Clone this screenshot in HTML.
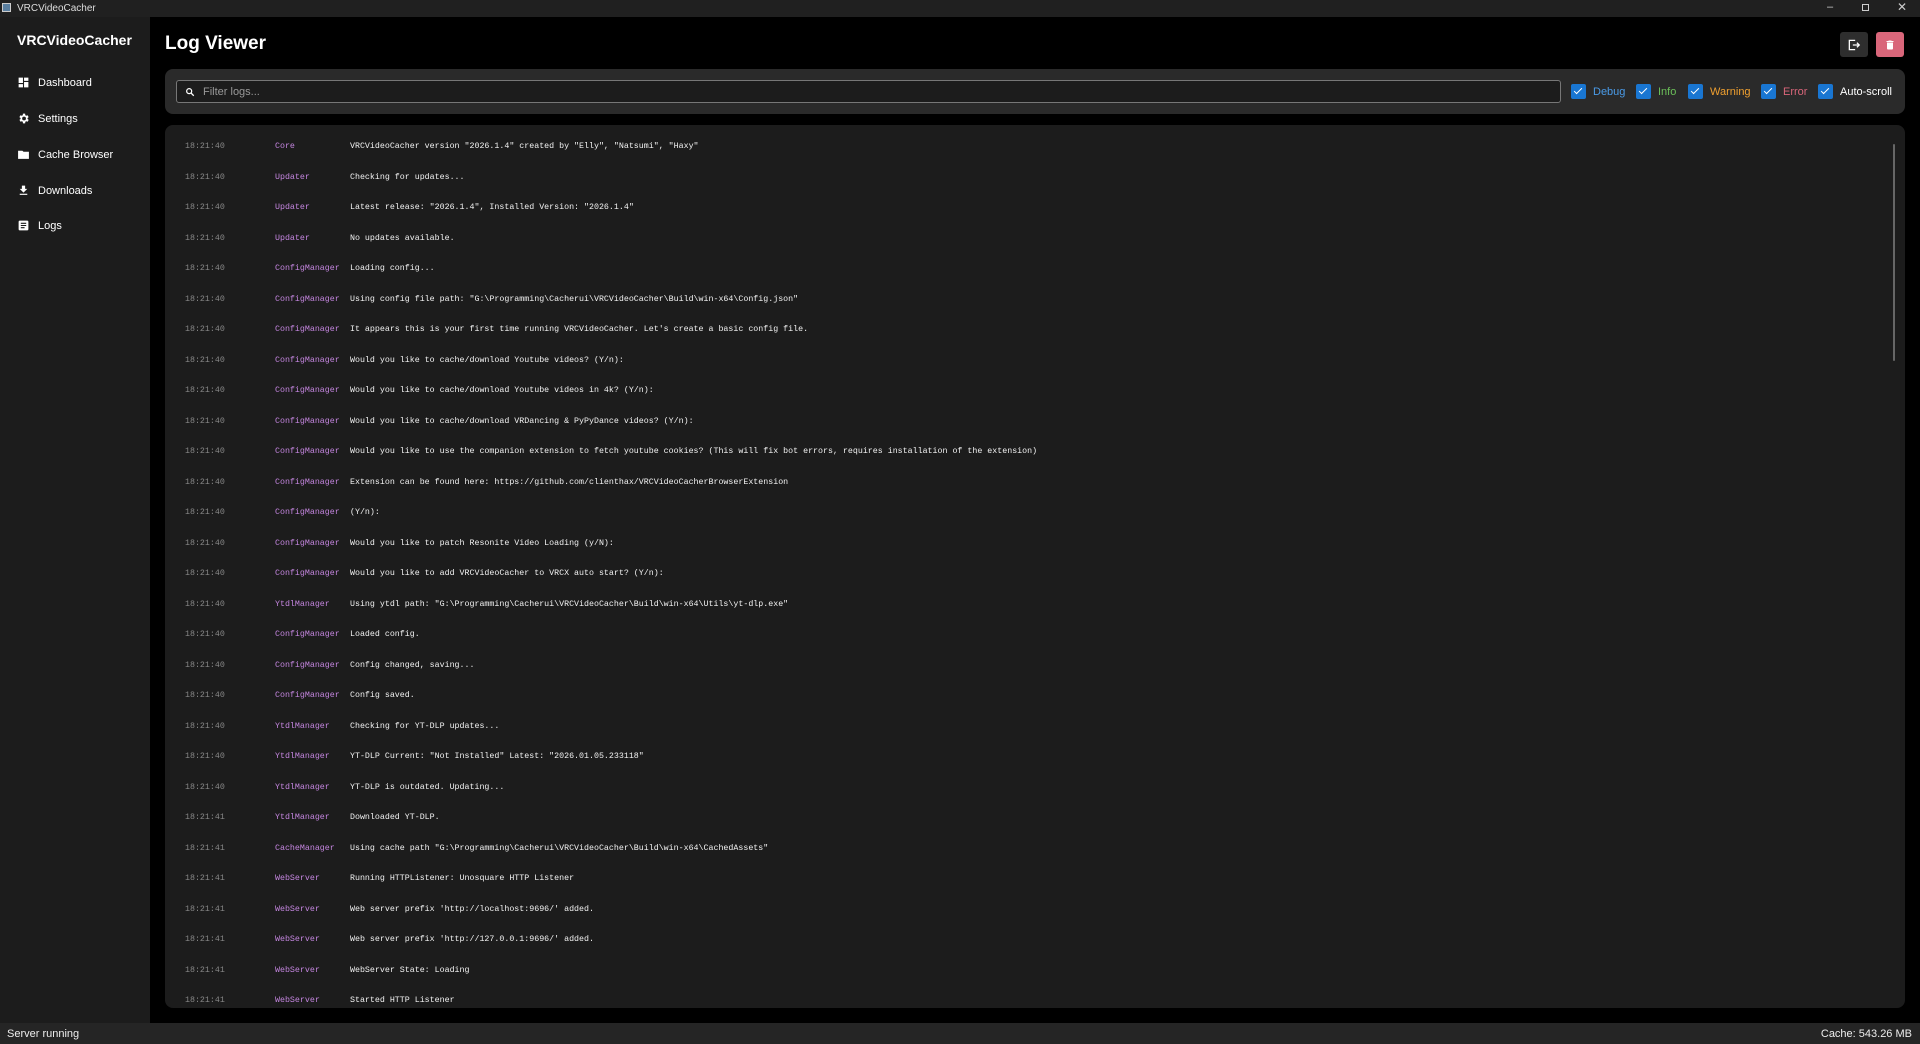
<!DOCTYPE html>
<html><head><meta charset="utf-8"><style>
*{box-sizing:border-box;margin:0;padding:0}
body{width:1920px;height:1044px;background:#000;font-family:"Liberation Sans",sans-serif;color:#fff;overflow:hidden;position:relative}
.tb{position:absolute;left:0;top:0;width:1920px;height:17px;background:#202020;font-size:10px;color:#ddd}
.tb .t{position:absolute;left:17px;top:3px}
.tb .ic{position:absolute;left:2px;top:3px;width:9px;height:9px;background:#5a7fa0;border:1px solid #ccc}
.side{position:absolute;left:0;top:17px;width:150px;height:1006px;background:#1c1c1c}
.brand{position:absolute;left:17px;top:15px;font-size:14px;font-weight:bold}
.nav{position:absolute;left:17px;font-size:11px;display:flex;align-items:center}
.nav svg{width:13px;height:13px;margin-right:8px;fill:#fff}
h1{position:absolute;left:165px;top:33px;font-size:19px;font-weight:bold}
.btn{position:absolute;top:32px;width:28px;height:25px;border-radius:3px;display:flex;align-items:center;justify-content:center}
.filter{position:absolute;left:165px;top:69px;width:1740px;height:45px;background:#2a2a2a;border-radius:8px}
.inp{position:absolute;left:11px;top:11px;width:1385px;height:23px;border:1px solid #777;border-radius:3px;background:#1c1c1c;font-size:11px;color:#999;padding:5px 0 0 26px}
.cb{position:absolute;top:15px;font-size:11px;display:flex;align-items:center}
.cb i{display:inline-block;width:15px;height:15px;background:#1976d2;border-radius:2px;margin-right:7px;position:relative}
.cb i:after{content:"";position:absolute;left:5px;top:2px;width:3px;height:7px;border:solid #fff;border-width:0 1.3px 1.3px 0;transform:rotate(45deg)}
.logs{position:absolute;left:165px;top:125px;width:1740px;height:883px;background:#1c1c1c;border-radius:8px;overflow:hidden;padding-top:7px}
.r{height:30.5px;line-height:30.5px;font-family:"Liberation Mono",monospace;font-size:8.3px;position:relative;white-space:nowrap}
.r span{position:absolute}
.a{left:20px;color:#888}.b{left:110px;color:#c586e0}.c{left:185px;color:#f2f2f2}
.sb{position:absolute;left:1728px;top:19px;width:2px;height:217px;background:#666;border-radius:1px}
.st{position:absolute;left:0;top:1023px;width:1920px;height:21px;background:#252525;font-size:11px;color:#eee}
</style></head><body>
<div class="tb"><div class="ic"></div><div class="t">VRCVideoCacher</div>
<div style="position:absolute;left:1827px;top:1px;font-size:11px;color:#ccc">–</div>
<div style="position:absolute;left:1862px;top:4px;width:7px;height:7px;border:1px solid #ccc"></div>
<div style="position:absolute;left:1897px;top:0px;font-size:12px;color:#ccc">✕</div></div>
<div class="side">
<div class="brand">VRCVideoCacher</div>
<div class="nav" style="top:59px"><svg viewBox="0 0 24 24"><path d="M3 13h8V3H3v10zm0 8h8v-6H3v6zm10 0h8V11h-8v10zm0-18v6h8V3h-8z"/></svg>Dashboard</div>
<div class="nav" style="top:95px"><svg viewBox="0 0 24 24"><path d="M19.4 13a7.5 7.5 0 000-2l2.1-1.6-2-3.5-2.5 1a7 7 0 00-1.7-1L15 3h-4l-.4 2.9a7 7 0 00-1.7 1l-2.5-1-2 3.5L6.6 11a7.5 7.5 0 000 2l-2.1 1.6 2 3.5 2.5-1a7 7 0 001.7 1L11 21h4l.4-2.9a7 7 0 001.7-1l2.5 1 2-3.5L19.4 13zM13 15.5a3.5 3.5 0 110-7 3.5 3.5 0 010 7z"/></svg>Settings</div>
<div class="nav" style="top:131px"><svg viewBox="0 0 24 24"><path d="M2 5h8l2 2h10v13H2z"/></svg>Cache Browser</div>
<div class="nav" style="top:167px"><svg viewBox="0 0 24 24"><path d="M19 9h-4V3H9v6H5l7 7 7-7zM5 18v2h14v-2H5z"/></svg>Downloads</div>
<div class="nav" style="top:202px"><svg viewBox="0 0 24 24"><path d="M19 3H5a2 2 0 00-2 2v14a2 2 0 002 2h14a2 2 0 002-2V5a2 2 0 00-2-2zm-5 14H7v-2h7v2zm3-4H7v-2h10v2zm0-4H7V7h10v2z"/></svg>Logs</div>
</div>
<h1>Log Viewer</h1>
<div class="btn" style="left:1840px;background:#2e2e2e"><svg width="14" height="14" viewBox="0 0 24 24" fill="none" stroke="#fff" stroke-width="2.2"><path d="M14 4H4v16h10M10 12h11M17 8l4 4-4 4"/></svg></div>
<div class="btn" style="left:1876px;background:#d9667a"><svg width="12" height="14" viewBox="0 0 24 24" fill="#fff"><path d="M6 19a2 2 0 002 2h8a2 2 0 002-2V7H6v12zM19 4h-3.5l-1-1h-5l-1 1H5v2h14V4z"/></svg></div>
<div class="filter">
<div class="inp"><svg style="position:absolute;left:8px;top:6px" width="10" height="10" viewBox="0 0 24 24" fill="none" stroke="#fff" stroke-width="3"><circle cx="10" cy="10" r="6"/><path d="M15 15l6 6"/></svg>Filter logs...</div>
<div class="cb" style="left:1406px;color:#4a9be8"><i></i>Debug</div>
<div class="cb" style="left:1471px;color:#6bbf59"><i></i>Info</div>
<div class="cb" style="left:1523px;color:#f0a030"><i></i>Warning</div>
<div class="cb" style="left:1596px;color:#d9667a"><i></i>Error</div>
<div class="cb" style="left:1653px;color:#fff"><i></i>Auto-scroll</div>
</div>
<div class="logs">
<div class="sb"></div>
<div class="r"><span class="a">18:21:40</span><span class="b">Core</span><span class="c">VRCVideoCacher version "2026.1.4" created by "Elly", "Natsumi", "Haxy"</span></div>
<div class="r"><span class="a">18:21:40</span><span class="b">Updater</span><span class="c">Checking for updates...</span></div>
<div class="r"><span class="a">18:21:40</span><span class="b">Updater</span><span class="c">Latest release: "2026.1.4", Installed Version: "2026.1.4"</span></div>
<div class="r"><span class="a">18:21:40</span><span class="b">Updater</span><span class="c">No updates available.</span></div>
<div class="r"><span class="a">18:21:40</span><span class="b">ConfigManager</span><span class="c">Loading config...</span></div>
<div class="r"><span class="a">18:21:40</span><span class="b">ConfigManager</span><span class="c">Using config file path: "G:\Programming\Cacherui\VRCVideoCacher\Build\win-x64\Config.json"</span></div>
<div class="r"><span class="a">18:21:40</span><span class="b">ConfigManager</span><span class="c">It appears this is your first time running VRCVideoCacher. Let's create a basic config file.</span></div>
<div class="r"><span class="a">18:21:40</span><span class="b">ConfigManager</span><span class="c">Would you like to cache/download Youtube videos? (Y/n):</span></div>
<div class="r"><span class="a">18:21:40</span><span class="b">ConfigManager</span><span class="c">Would you like to cache/download Youtube videos in 4k? (Y/n):</span></div>
<div class="r"><span class="a">18:21:40</span><span class="b">ConfigManager</span><span class="c">Would you like to cache/download VRDancing &amp; PyPyDance videos? (Y/n):</span></div>
<div class="r"><span class="a">18:21:40</span><span class="b">ConfigManager</span><span class="c">Would you like to use the companion extension to fetch youtube cookies? (This will fix bot errors, requires installation of the extension)</span></div>
<div class="r"><span class="a">18:21:40</span><span class="b">ConfigManager</span><span class="c">Extension can be found here: https://github.com/clienthax/VRCVideoCacherBrowserExtension</span></div>
<div class="r"><span class="a">18:21:40</span><span class="b">ConfigManager</span><span class="c">(Y/n):</span></div>
<div class="r"><span class="a">18:21:40</span><span class="b">ConfigManager</span><span class="c">Would you like to patch Resonite Video Loading (y/N):</span></div>
<div class="r"><span class="a">18:21:40</span><span class="b">ConfigManager</span><span class="c">Would you like to add VRCVideoCacher to VRCX auto start? (Y/n):</span></div>
<div class="r"><span class="a">18:21:40</span><span class="b">YtdlManager</span><span class="c">Using ytdl path: "G:\Programming\Cacherui\VRCVideoCacher\Build\win-x64\Utils\yt-dlp.exe"</span></div>
<div class="r"><span class="a">18:21:40</span><span class="b">ConfigManager</span><span class="c">Loaded config.</span></div>
<div class="r"><span class="a">18:21:40</span><span class="b">ConfigManager</span><span class="c">Config changed, saving...</span></div>
<div class="r"><span class="a">18:21:40</span><span class="b">ConfigManager</span><span class="c">Config saved.</span></div>
<div class="r"><span class="a">18:21:40</span><span class="b">YtdlManager</span><span class="c">Checking for YT-DLP updates...</span></div>
<div class="r"><span class="a">18:21:40</span><span class="b">YtdlManager</span><span class="c">YT-DLP Current: "Not Installed" Latest: "2026.01.05.233118"</span></div>
<div class="r"><span class="a">18:21:40</span><span class="b">YtdlManager</span><span class="c">YT-DLP is outdated. Updating...</span></div>
<div class="r"><span class="a">18:21:41</span><span class="b">YtdlManager</span><span class="c">Downloaded YT-DLP.</span></div>
<div class="r"><span class="a">18:21:41</span><span class="b">CacheManager</span><span class="c">Using cache path "G:\Programming\Cacherui\VRCVideoCacher\Build\win-x64\CachedAssets"</span></div>
<div class="r"><span class="a">18:21:41</span><span class="b">WebServer</span><span class="c">Running HTTPListener: Unosquare HTTP Listener</span></div>
<div class="r"><span class="a">18:21:41</span><span class="b">WebServer</span><span class="c">Web server prefix 'http://localhost:9696/' added.</span></div>
<div class="r"><span class="a">18:21:41</span><span class="b">WebServer</span><span class="c">Web server prefix 'http://127.0.0.1:9696/' added.</span></div>
<div class="r"><span class="a">18:21:41</span><span class="b">WebServer</span><span class="c">WebServer State: Loading</span></div>
<div class="r"><span class="a">18:21:41</span><span class="b">WebServer</span><span class="c">Started HTTP Listener</span></div>
</div>
<div class="st"><span style="position:absolute;left:7px;top:5px">Server running</span><span style="position:absolute;right:8px;top:5px">Cache: 543.26 MB</span></div>
</body></html>
